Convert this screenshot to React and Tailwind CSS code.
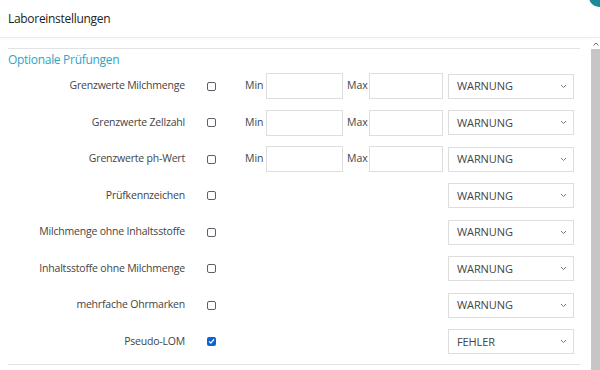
import React from 'react';

const rows = [
  { label: 'Grenzwerte Milchmenge', range: true, level: 'WARNUNG' },
  { label: 'Grenzwerte Zellzahl', range: true, level: 'WARNUNG' },
  { label: 'Grenzwerte ph-Wert', range: true, level: 'WARNUNG' },
  { label: 'Prüfkennzeichen', level: 'WARNUNG' },
  { label: 'Milchmenge ohne Inhaltsstoffe', level: 'WARNUNG' },
  { label: 'Inhaltsstoffe ohne Milchmenge', level: 'WARNUNG' },
  { label: 'mehrfache Ohrmarken', level: 'WARNUNG' },
  { label: 'Pseudo-LOM', checked: true, level: 'FEHLER' },
];

const Checkbox = ({ checked }) =>
  checked ? (
    <span className="flex h-[9px] w-[9px] items-center justify-center rounded-[2px] bg-[#0b63d6]">
      <svg width="7" height="7" viewBox="0 0 8 8" fill="none">
        <path d="M1.5 4.2 L3.2 5.8 L6.5 2" stroke="white" strokeWidth="1.4" strokeLinecap="round" strokeLinejoin="round" />
      </svg>
    </span>
  ) : (
    <span className="block h-[9px] w-[9px] rounded-[2px] border border-[#5f5f6a]" />
  );

const Select = ({ value }) => (
  <div className="ml-[5px] flex h-[25px] w-[126px] items-center justify-between border border-[#dedede] bg-white pl-[8px] pr-[6px] text-[11px] tracking-[-0.1px] text-[#444]">
    <span>{value}</span>
    <svg width="7" height="5" viewBox="0 0 7 5" fill="none">
      <path d="M1 1 L3.5 3.5 L6 1" stroke="#777" strokeWidth="1" />
    </svg>
  </div>
);

export default function App() {
  return (
    <div className="relative h-[370px] w-[600px] overflow-hidden bg-white font-['Open_Sans',sans-serif] text-[#333]">
      <div className="absolute right-[-9px] top-[-13px] h-[20px] w-[20px] rounded-full bg-[#1c8b99]" />

      <div className="flex h-[38px] items-center border-b border-[#ececec] px-[8px] text-[12px] tracking-[-0.3px] text-[#222] shadow-[0_1px_2px_rgba(0,0,0,0.04)]">
        Laboreinstellungen
      </div>

      <div className="flex">
        <div className="flex-1 pl-[8px] pr-[11px] pt-[10px]">
          <div className="border-t border-[#e3e3e3] pt-[2px]">
            <div className="h-[17px] text-[12px] leading-[17px] tracking-[-0.3px] text-[#2ea5c6]">Optionale Prüfungen</div>
            {rows.map((row) => (
              <div key={row.label} className="flex h-[36.5px] items-center text-[10.5px] text-[#444]">
                <div className="w-[177px] text-right tracking-[-0.2px]">{row.label}</div>
                <div className="ml-[22px] w-[9px]">
                  <Checkbox checked={row.checked} />
                </div>
                <div className="ml-[29px] flex w-[198px] items-center">
                  {row.range && (
                    <>
                      <span className="w-[21px]">Min</span>
                      <div className="h-[26px] w-[77px] border border-[#dedede]" />
                      <span className="w-[26px] pl-[4px]">Max</span>
                      <div className="h-[26px] w-[74px] border border-[#dedede]" />
                    </>
                  )}
                </div>
                <Select value={row.level} />
              </div>
            ))}
            <div className="mt-[4px] border-t border-[#e3e3e3]" />
          </div>
        </div>

        <div className="flex h-[332px] w-[9px] flex-col bg-[#f1f1f1]">
          <div className="flex h-[11px] items-center justify-center bg-white">
            <svg width="6" height="4" viewBox="0 0 6 4" fill="none">
              <path d="M0.5 3.5 L3 1 L5.5 3.5" stroke="#666" strokeWidth="1" />
            </svg>
          </div>
          <div className="flex-1 bg-[#c6c6c6]" />
        </div>
      </div>
    </div>
  );
}
